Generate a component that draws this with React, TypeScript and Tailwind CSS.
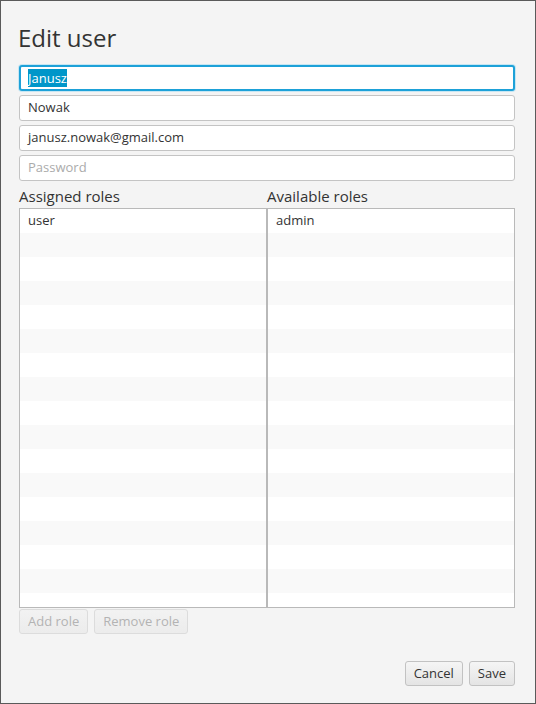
import React from "react";

const font = { fontFamily: '"Open Sans", "Noto Sans", sans-serif' };

function RoleList({ items }: { items: string[] }) {
  const rows = Array.from({ length: 17 }, (_, i) => items[i] ?? "");
  return (
    <div className="w-full h-[400px] border border-[#b9b9b9] bg-white overflow-hidden">
      {rows.map((r, i) => (
        <div
          key={i}
          className={`h-[24px] flex items-center pl-[8px] text-[13px] text-[#333333] ${
            i % 2 === 1 ? "bg-[#f9f9f9]" : "bg-white"
          }`}
        >
          {r}
        </div>
      ))}
    </div>
  );
}

function Btn({ children, disabled }: { children: React.ReactNode; disabled?: boolean }) {
  return (
    <div
      className={`h-[25px] px-[8px] flex items-center justify-center rounded-[3px] border bg-gradient-to-b text-[13px] ${
        disabled
          ? "text-[#b3b3b3] border-[#dcdcdc] from-[#f2f2f2] to-[#ececec]"
          : "text-[#333333] border-[#c2c2c2] from-[#f5f5f5] to-[#e4e4e4]"
      }`}
    >
      {children}
    </div>
  );
}

export default function App() {
  return (
    <div
      style={font}
      className="w-[536px] h-[704px] border border-[#5a5a5a] bg-[#f4f4f4] flex flex-col pl-[18px] pr-[20px] pt-[19px] pb-[17px] box-border"
    >
      <div className="text-[24px] leading-[36px] text-[#333333] h-[36px] -ml-[1px]">Edit user</div>
      <div className="mt-[9px] flex flex-col gap-[4px]">
        <div className="h-[26px] rounded-[3px] border-2 border-[#1da1d8] bg-white flex items-center pl-[7px] shadow-[0_0_0_1px_#c6e6f3]">
          <span className="text-[13px] text-white bg-[#0096c9] leading-[18px]">Janusz</span>
        </div>
        <div className="h-[26px] rounded-[3px] border border-[#c4c4c4] bg-white flex items-center pl-[8px] text-[13px] text-[#333333]">
          Nowak
        </div>
        <div className="h-[26px] rounded-[3px] border border-[#c4c4c4] bg-white flex items-center pl-[8px] text-[13px] text-[#333333]">
          janusz.nowak@gmail.com
        </div>
        <div className="h-[26px] rounded-[3px] border border-[#c4c4c4] bg-white flex items-center pl-[8px] text-[13px] text-[#ababab]">
          Password
        </div>
      </div>
      <div className="flex">
        <div className="flex-1 flex flex-col">
          <div className="h-[27px] text-[15px] leading-[30px] text-[#333333]">Assigned roles</div>
          <RoleList items={["user"]} />
        </div>
        <div className="flex-1 flex flex-col">
          <div className="h-[27px] text-[15px] leading-[30px] text-[#333333]">Available roles</div>
          <RoleList items={["admin"]} />
        </div>
      </div>
      <div className="flex gap-[6px] mt-[1px]">
        <Btn disabled>Add role</Btn>
        <Btn disabled>Remove role</Btn>
      </div>
      <div className="flex-1" />
      <div className="flex justify-end gap-[6px]">
        <Btn>Cancel</Btn>
        <Btn>Save</Btn>
      </div>
    </div>
  );
}
